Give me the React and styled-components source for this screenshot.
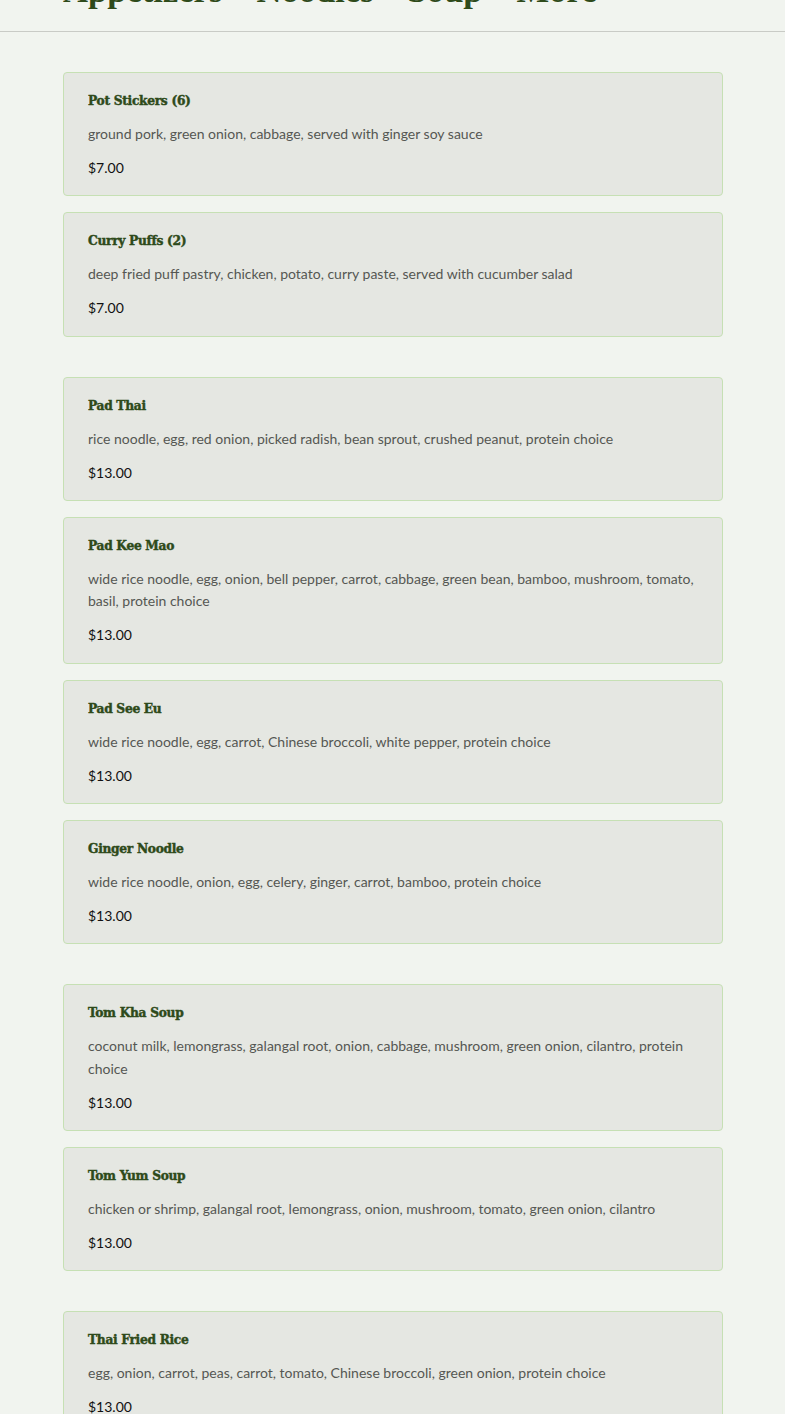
import React from 'react'
import styled, { createGlobalStyle } from 'styled-components'

const MENU = [
  [
    { name: 'Pot Stickers (6)', desc: 'ground pork, green onion, cabbage, served with ginger soy sauce', price: '$7.00' },
    { name: 'Curry Puffs (2)', desc: 'deep fried puff pastry, chicken, potato, curry paste, served with cucumber salad', price: '$7.00' },
  ],
  [
    { name: 'Pad Thai', desc: 'rice noodle, egg, red onion, picked radish, bean sprout, crushed peanut, protein choice', price: '$13.00' },
    { name: 'Pad Kee Mao', desc: 'wide rice noodle, egg, onion, bell pepper, carrot, cabbage, green bean, bamboo, mushroom, tomato, basil, protein choice', price: '$13.00' },
    { name: 'Pad See Eu', desc: 'wide rice noodle, egg, carrot, Chinese broccoli, white pepper, protein choice', price: '$13.00' },
    { name: 'Ginger Noodle', desc: 'wide rice noodle, onion, egg, celery, ginger, carrot, bamboo, protein choice', price: '$13.00' },
  ],
  [
    { name: 'Tom Kha Soup', desc: 'coconut milk, lemongrass, galangal root, onion, cabbage, mushroom, green onion, cilantro, protein choice', price: '$13.00' },
    { name: 'Tom Yum Soup', desc: 'chicken or shrimp, galangal root, lemongrass, onion, mushroom, tomato, green onion, cilantro', price: '$13.00' },
  ],
  [
    { name: 'Thai Fried Rice', desc: 'egg, onion, carrot, peas, carrot, tomato, Chinese broccoli, green onion, protein choice', price: '$13.00' },
    { name: 'Green Curry', desc: 'coconut milk, bamboo, bell pepper, basil, green bean, protein choice', price: '$13.00' },
  ],
]

const NAV = ['Appetizers', 'Noodles', 'Soup', 'More']

export default function App() {
  return (
    <>
      <GlobalStyle />
      <Header>
        <Nav>
          {NAV.map((item) => (
            <a key={item} href={'#' + item.toLowerCase()}>{item}</a>
          ))}
        </Nav>
      </Header>
      <Main>
        {MENU.map((group, i) => (
          <Group key={i}>
            {group.map((dish) => (
              <Card key={dish.name}>
                <h3>{dish.name}</h3>
                <p className='desc'>{dish.desc}</p>
                <p className='price'>{dish.price}</p>
              </Card>
            ))}
          </Group>
        ))}
      </Main>
    </>
  )
}

const GlobalStyle = createGlobalStyle`
* { box-sizing: border-box; }
body {
  margin: 0;
  background: #f1f4ef;
  font-family: Lato, "Liberation Sans", sans-serif;
  overflow: hidden;
}
`;

const Header = styled.header`
margin-top: -30px;
padding: 0 63px 20px;
border-bottom: 1px solid #c9cbc6;
`;

const Nav = styled.nav`
display: flex;
gap: 34px;
a{
  color: #2e4a1a;
  text-decoration: none;
  font-family: "Liberation Serif", serif;
  font-weight: 700;
  font-size: 34.6px;
  line-height: 41px;
}
`;

const Main = styled.main`
padding: 40px 62px 40px 63px;
display: flex;
flex-direction: column;
gap: 40px;
`;

const Group = styled.section`
display: flex;
flex-direction: column;
gap: 16px;
`;

const Card = styled.article`
background: #e5e7e2;
border: 1px solid #c6e0b4;
border-radius: 4px;
padding: 16px 24px;
display: flex;
flex-direction: column;
gap: 11.55px;
h3{
  margin: 0;
  color: #2e4a1a;
  font-family: "DejaVu Serif Condensed", "DejaVu Serif", serif;
  font-weight: 700;
  font-size: 13.6px;
  line-height: 22.4px;
  letter-spacing: -0.3px;
  -webkit-text-stroke: 0.45px #2e4a1a;
}
p{
  margin: 0;
  font-size: 14px;
  line-height: 22.4px;
}
.desc{
  color: #555753;
}
.price{
  color: #111;
}
`;
